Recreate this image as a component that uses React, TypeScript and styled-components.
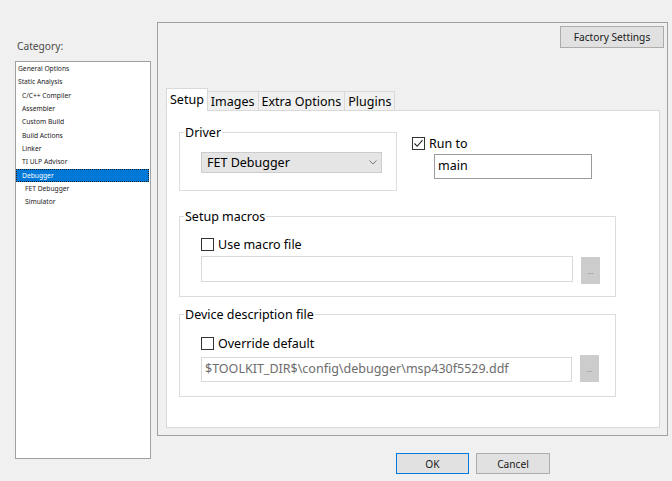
import styled, { createGlobalStyle } from "styled-components"

const GlobalStyle = createGlobalStyle`
  html, body {
    margin: 0;
    padding: 0;
    background: #f0f0f0;
  }
  body {
    font-family: "Noto Sans", "Open Sans", sans-serif;
    color: #000;
  }
  * {
    box-sizing: border-box;
  }
`

const Window = styled.div`
  width: 672px;
  height: 481px;
  display: grid;
  grid-template-columns: 136px 511px;
  column-gap: 6px;
  padding-left: 15px;
  overflow: hidden;
`

const Sidebar = styled.div`
  display: flex;
  flex-direction: column;
  padding-top: 38px;
`

const CategoryLabel = styled.div`
  font-size: 10.2px;
  line-height: 16px;
  color: #4a4a4a;
  padding-left: 2px;
  margin-bottom: 7px;
`

const Tree = styled.ul`
  list-style: none;
  margin: 0;
  padding: 0;
  height: 398px;
  border: 1px solid #a0a0a0;
  background: #fff;
`

const indent = [2, 6, 9]

const TreeItem = styled.li<{ $level: number; $selected?: boolean }>`
  height: 13.33px;
  line-height: 13.33px;
  font-size: 6.7px;
  white-space: nowrap;
  padding-left: ${(p) => indent[p.$level]}px;
  margin-right: 1px;
  color: ${(p) => (p.$selected ? "#fff" : "#1a1a1a")};
  background: ${(p) => (p.$selected ? "#0078d7" : "transparent")};
  outline: ${(p) => (p.$selected ? "1px dotted #202020" : "none")};
  outline-offset: -1px;
`

const Main = styled.div`
  display: flex;
  flex-direction: column;
  padding-top: 22px;
`

const Panel = styled.div`
  height: 414px;
  border: 1px solid #a0a0a0;
  padding: 3px 3px 7px 8px;
  display: flex;
  flex-direction: column;
`

const PanelTop = styled.div`
  display: flex;
  justify-content: flex-end;
`

const PushButton = styled.button<{ $width: number; $default?: boolean }>`
  font-family: inherit;
  font-size: 10.2px;
  color: #1a1a1a;
  background: #e1e1e1;
  border: 1px solid ${(p) => (p.$default ? "#0078d7" : "#adadad")};
  width: ${(p) => p.$width}px;
  height: 22px;
  padding: 0;
`

const TabStrip = styled.div`
  display: flex;
  align-items: flex-end;
  height: 23px;
  margin-top: 40px;
  margin-bottom: -1px;
  position: relative;
  z-index: 1;
`

const Tab = styled.div<{ $active?: boolean }>`
  font-size: 12.5px;
  height: ${(p) => (p.$active ? 23 : 20)}px;
  line-height: ${(p) => (p.$active ? 22 : 19)}px;
  padding: 0 3px;
  margin-right: -1px;
  border: 1px solid #d9d9d9;
  border-bottom-color: ${(p) => (p.$active ? "#fff" : "#d9d9d9")};
  background: ${(p) => (p.$active ? "#fff" : "#f0f0f0")};
`

const TabBody = styled.div`
  flex: 1;
  background: #fff;
  border: 1px solid #d9d9d9;
  margin-right: 4px;
  padding: 12px 0 0 12px;
  font-size: 12.5px;
`

const TopRow = styled.div`
  display: flex;
  align-items: flex-start;
  gap: 15px;
`

const Group = styled.fieldset<{ $width: number; $top?: number }>`
  margin: ${(p) => p.$top ?? 0}px 0 0 0;
  padding: 0;
  min-width: 0;
  width: ${(p) => p.$width}px;
  border: 1px solid #dcdcdc;
`

const Legend = styled.legend`
  margin-left: 4px;
  padding: 0 1px;
  font-size: 12.5px;
  line-height: 19px;
`

const GroupBody = styled.div<{ $pad: string }>`
  padding: ${(p) => p.$pad};
`

const Select = styled.div`
  width: 181px;
  height: 21px;
  background: #e5e5e5;
  border: 1px solid #cccccc;
  display: flex;
  align-items: center;
  justify-content: space-between;
  padding: 0 4px 0 5px;
  line-height: 19px;
`

const RunTo = styled.div`
  margin-top: 11px;
  display: flex;
  flex-direction: column;
`

const CheckRow = styled.label`
  display: flex;
  align-items: center;
  height: 19px;
  gap: 4px;
  line-height: 19px;
`

const Box = styled.span`
  width: 13px;
  height: 13px;
  border: 1px solid #333;
  background: #fff;
  display: inline-flex;
  align-items: center;
  justify-content: center;
`

const TextBox = styled.div<{ $width: number; $height: number; $disabled?: boolean; $indent?: number; $top?: number }>`
  width: ${(p) => p.$width}px;
  height: ${(p) => p.$height}px;
  margin-left: ${(p) => p.$indent ?? 0}px;
  margin-top: ${(p) => p.$top ?? 0}px;
  border: 1px solid ${(p) => (p.$disabled ? "#d9d9d9" : "#9a9a9a")};
  background: #fff;
  color: ${(p) => (p.$disabled ? "#6d6d6d" : "#000")};
  padding-left: 3px;
  line-height: ${(p) => p.$height - 3}px;
  white-space: nowrap;
  overflow: hidden;
`

const FileRow = styled.div<{ $top: number }>`
  display: flex;
  align-items: flex-start;
  gap: 8px;
  margin-top: ${(p) => p.$top}px;
`

const Browse = styled.div<{ $shift: number }>`
  width: 19px;
  height: 27px;
  margin-top: ${(p) => p.$shift}px;
  background: #cccccc;
  color: #8a8a8a;
  font-size: 7px;
  line-height: 7px;
  display: flex;
  align-items: flex-end;
  justify-content: center;
  padding-bottom: 9px;
`

const Footer = styled.div`
  display: flex;
  gap: 7px;
  margin-top: 17px;
  padding-left: 239px;
  & > button {
    height: 21px;
  }
`

function CheckBox({ checked, label }: { checked?: boolean; label: string }) {
  return (
    <CheckRow>
      <Box>
        {checked && (
          <svg width="11" height="11" viewBox="0 0 11 11">
            <polyline points="1.5,5.5 4.2,8.3 9.5,2.2" fill="none" stroke="#222" strokeWidth="1.1" />
          </svg>
        )}
      </Box>
      {label}
    </CheckRow>
  )
}

const categories: { name: string; level: number; selected?: boolean }[] = [
  { name: "General Options", level: 0 },
  { name: "Static Analysis", level: 0 },
  { name: "C/C++ Compiler", level: 1 },
  { name: "Assembler", level: 1 },
  { name: "Custom Build", level: 1 },
  { name: "Build Actions", level: 1 },
  { name: "Linker", level: 1 },
  { name: "TI ULP Advisor", level: 1 },
  { name: "Debugger", level: 1, selected: true },
  { name: "FET Debugger", level: 2 },
  { name: "Simulator", level: 2 },
]

const tabs = ["Setup", "Images", "Extra Options", "Plugins"]

export default function App() {
  return (
    <>
      <GlobalStyle />
      <Window>
        <Sidebar>
          <CategoryLabel>Category:</CategoryLabel>
          <Tree>
            {categories.map((c) => (
              <TreeItem key={c.name} $level={c.level} $selected={c.selected}>
                {c.name}
              </TreeItem>
            ))}
          </Tree>
        </Sidebar>

        <Main>
          <Panel>
            <PanelTop>
              <PushButton $width={104}>Factory Settings</PushButton>
            </PanelTop>
            <TabStrip>
              {tabs.map((t, i) => (
                <Tab key={t} $active={i === 0}>
                  {t}
                </Tab>
              ))}
            </TabStrip>
            <TabBody>
              <TopRow>
                <Group $width={218}>
                  <Legend>Driver</Legend>
                  <GroupBody $pad="10px 0 17px 21px">
                    <Select>
                      FET Debugger
                      <svg width="8" height="5" viewBox="0 0 8 5">
                        <polyline points="0.5,0.5 4,4 7.5,0.5" fill="none" stroke="#777" strokeWidth="1" />
                      </svg>
                    </Select>
                  </GroupBody>
                </Group>
                <RunTo>
                  <CheckBox checked label="Run to" />
                  <TextBox $width={158} $height={25} $indent={22} $top={1}>
                    main
                  </TextBox>
                </RunTo>
              </TopRow>

              <Group $width={437} $top={16}>
                <Legend>Setup macros</Legend>
                <GroupBody $pad="9px 0 12px 21px">
                  <CheckBox label="Use macro file" />
                  <FileRow $top={2}>
                    <TextBox $width={372} $height={26} $disabled />
                    <Browse $shift={1}>...</Browse>
                  </FileRow>
                </GroupBody>
              </Group>

              <Group $width={437} $top={8}>
                <Legend>Device description file</Legend>
                <GroupBody $pad="10px 0 14px 21px">
                  <CheckBox label="Override default" />
                  <FileRow $top={4}>
                    <TextBox $width={371} $height={25} $disabled>
                      $TOOLKIT_DIR$\config\debugger\msp430f5529.ddf
                    </TextBox>
                    <Browse $shift={-2}>...</Browse>
                  </FileRow>
                </GroupBody>
              </Group>
            </TabBody>
          </Panel>
          <Footer>
            <PushButton $width={73} $default>
              OK
            </PushButton>
            <PushButton $width={74}>Cancel</PushButton>
          </Footer>
        </Main>
      </Window>
    </>
  )
}
